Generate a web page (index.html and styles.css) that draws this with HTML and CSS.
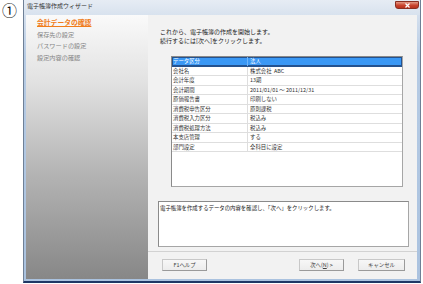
FILE: index.html
```html
<!DOCTYPE html>
<html lang="ja">
<head>
    <meta charset="UTF-8">
    <title>電子帳簿作成ウィザード</title>
    <link rel="stylesheet" href="styles.css">
</head>
<body>
    <div class="page">
        <div class="step-no">①</div>

        <div class="wizard">
            <!-- Title bar -->
            <div class="titlebar">
                <span class="title">電子帳簿作成ウィザード</span>
                <span class="close-btn">
                    <svg width="9" height="5" viewBox="0 0 9 5">
                        <path d="M2.5 0.5 L6.5 4.5 M6.5 0.5 L2.5 4.5" stroke="#fff" stroke-width="1.3"/>
                    </svg>
                </span>
            </div>

            <div class="frame">
                <!-- Wizard steps -->
                <ul class="steps">
                    <li class="active">会計データの確認</li>
                    <li>保存先の設定</li>
                    <li>パスワードの設定</li>
                    <li>設定内容の確認</li>
                </ul>

                <div class="main">
                    <p class="intro">これから、電子帳簿の作成を開始します。<br>続行するには[次へ]をクリックします。</p>

                    <div class="summary">
                        <div class="row selected"><span>データ区分</span><span>法人</span></div>
                        <div class="row"><span>会社名</span><span>株式会社&nbsp;&nbsp;ABC</span></div>
                        <div class="row"><span>会計年度</span><span>13期</span></div>
                        <div class="row"><span>会計期間</span><span>2011/01/01 ～ 2011/12/31</span></div>
                        <div class="row"><span>原価報告書</span><span>印刷しない</span></div>
                        <div class="row"><span>消費税申告区分</span><span>原則課税</span></div>
                        <div class="row"><span>消費税入力区分</span><span>税込み</span></div>
                        <div class="row"><span>消費税処理方法</span><span>税込み</span></div>
                        <div class="row"><span>本支店管理</span><span>する</span></div>
                        <div class="row"><span>部門設定</span><span>全科目に設定</span></div>
                    </div>

                    <div class="message">電子帳簿を作成するデータの内容を確認し、「次へ」をクリックします。</div>

                    <div class="footer">
                        <button type="button" class="btn help-btn">F1ヘルプ</button>
                        <button type="button" class="btn next-btn">次へ(<u>N</u>) &gt;</button>
                        <button type="button" class="btn cancel-btn">キャンセル</button>
                    </div>
                </div>
            </div>
        </div>
    </div>
</body>
</html>
```

FILE: styles.css
```css
/* General Styles */
* {
    margin: 0;
    padding: 0;
    box-sizing: border-box;
    font-family: "Noto Sans CJK JP", "Noto Sans", sans-serif;
}

body {
    background-color: #fff;
    color: #222;
}

.page {
    display: flex;
    width: 423px;
    height: 284px;
}

.step-no {
    width: 23px;
    padding: 0 0 0 2px;
    font-family: "Noto Sans CJK JP", sans-serif;
    font-size: 15px;
    line-height: 20px;
    color: #111;
}

/* Window frame */
.wizard {
    display: flex;
    flex-direction: column;
    width: 398px;
    height: 283px;
    background: linear-gradient(#dfe7f1, #b6cbe4 20%, #aac2df);
    border-left: 1px solid #6f8096;
    border-right: 1px solid #6f8096;
    border-bottom: 2px solid #1f3765;
}

.titlebar {
    display: flex;
    align-items: flex-start;
    height: 15px;
    padding-left: 3px;
    background: linear-gradient(#e6ecf4, #d8e2ee);
}

.title {
    font-size: 6px;
    line-height: 12px;
    color: #333;
}

.close-btn {
    display: flex;
    align-items: center;
    justify-content: center;
    margin: 1px 1px 0 auto;
    width: 24px;
    height: 8px;
    background: linear-gradient(#e49a86, #c9452f 55%, #b8321e);
    border: 1px solid #8a2f22;
    border-radius: 0 0 3px 3px;
}

.frame {
    display: flex;
    height: 264px;
    margin: 0 3px 2px 2px;
}

/* Steps panel */
.steps {
    width: 122px;
    list-style: none;
    padding: 2px 0 0 11px;
    background: linear-gradient(#fafafa, #e2e2e2 25%, #b4b4b4 60%, #878787);
}

.steps li {
    height: 11.67px;
    font-size: 6.2px;
    line-height: 11.67px;
    color: #858585;
}

.steps li.active {
    font-size: 6.8px;
    font-weight: bold;
    color: #f07d1a;
    text-decoration: underline;
}

/* Main panel */
.main {
    flex: 1;
    display: flex;
    flex-direction: column;
    padding-top: 12px;
    background-color: #f2f2f2;
}

.intro {
    margin-left: 12px;
    font-size: 6px;
    line-height: 9px;
    color: #222;
}

.summary {
    margin: 11px 0 0 23px;
    width: 232px;
    height: 131px;
    background-color: #fff;
    border: 1px solid #a6a6a6;
    border-top-color: #8a8a8a;
    border-left-color: #8a8a8a;
}

.row {
    display: grid;
    grid-template-columns: 76px 1fr;
    height: 9.5px;
    font-size: 5.4px;
    line-height: 9px;
    color: #333;
    border-bottom: 1px solid #dedede;
}

.row span {
    padding-left: 1px;
    white-space: nowrap;
}

.row span:first-child {
    border-right: 1px solid #dedede;
}

.row span:last-child {
    padding-left: 2px;
}

.row.selected {
    background-color: #3a98f5;
    color: #fff;
    box-shadow: inset 0 0 0 1px #24528f;
    border-bottom-color: #24528f;
}

.row.selected span:first-child {
    border-right-color: #6fb4f8;
}

.message {
    margin: 14px 0 0 10px;
    width: 251px;
    height: 46px;
    padding: 2px 1px;
    font-size: 5.4px;
    line-height: 8px;
    color: #222;
    background-color: #fff;
    border: 1px solid #a6a6a6;
    border-top-color: #8a8a8a;
    border-left-color: #8a8a8a;
}

.footer {
    display: flex;
    margin-top: 4px;
    padding: 7px 12px 0 14px;
    border-top: 1px solid #d2d2d2;
}

.btn {
    height: 12px;
    width: 45px;
    font-size: 5.4px;
    line-height: 10px;
    color: #444;
    background: linear-gradient(#f7f7f7, #ececec);
    border: 1px solid #c8c8c8;
    border-right-color: #9a9a9a;
    border-bottom-color: #9a9a9a;
    cursor: pointer;
}

.next-btn {
    margin-left: auto;
}

.cancel-btn {
    width: 47px;
    margin-left: 14px;
}
```
